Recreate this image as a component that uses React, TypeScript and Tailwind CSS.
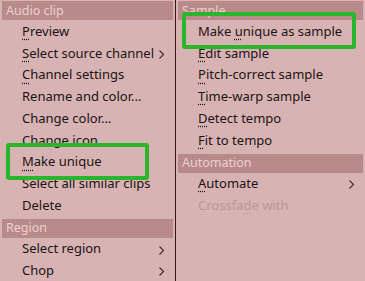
const font = { fontFamily: '"Noto Sans", "Open Sans", sans-serif' };

type Item = { label: string; key?: number; sub?: boolean; disabled?: boolean; header?: boolean };

const left: Item[] = [
  { label: "Audio clip", header: true },
  { label: "Preview", key: 0 },
  { label: "Select source channel", key: 0, sub: true },
  { label: "Channel settings", key: 0 },
  { label: "Rename and color..." },
  { label: "Change color..." },
  { label: "Change icon..." },
  { label: "Make unique", key: 0 },
  { label: "Select all similar clips" },
  { label: "Delete" },
  { label: "Region", header: true },
  { label: "Select region", sub: true },
  { label: "Chop", sub: true },
];

const right: Item[] = [
  { label: "Sample", header: true },
  { label: "Make unique as sample", key: 5 },
  { label: "Edit sample", key: 0 },
  { label: "Pitch-correct sample", key: 0 },
  { label: "Time-warp sample", key: 0 },
  { label: "Detect tempo", key: 0 },
  { label: "Fit to tempo", key: 0 },
  { label: "Automation", header: true },
  { label: "Automate", key: 0, sub: true },
  { label: "Crossfade with", key: 7, disabled: true },
];

const Label = ({ label, k }: { label: string; k?: number }) => {
  if (k === undefined) return <>{label}</>;
  return (
    <>
      {label.slice(0, k)}
      <span className="underline decoration-dotted underline-offset-[3px]">{label[k]}</span>
      {label.slice(k + 1)}
    </>
  );
};

const Row = ({ item }: { item: Item }) => {
  if (item.header) {
    return (
      <div className="h-[21.75px] flex items-center px-[2px]">
        <div className="w-full h-[19px] bg-[#b98a8a] text-[#ecd0d0] text-[12.5px] pl-[4px] flex items-center">
          {item.label}
        </div>
      </div>
    );
  }
  return (
    <div
      className={`h-[21.75px] flex items-center pl-[22px] pr-[10px] text-[13px] whitespace-nowrap ${
        item.disabled ? "text-[#bd9696]" : "text-[#1c1414]"
      }`}
    >
      <span className="flex-1 -mt-[2px]">
        <Label label={item.label} k={item.key} />
      </span>
      {item.sub && (
        <svg width="7" height="11" viewBox="0 0 7 11" className="text-[#3a2a2a]">
          <path d="M1.5 1.5 L5.5 5.5 L1.5 9.5" fill="none" stroke="currentColor" strokeWidth="1.1" />
        </svg>
      )}
    </div>
  );
};

export default function App() {
  return (
    <div className="w-[365px] h-[281px] bg-[#d7b3b3] flex overflow-hidden relative" style={font}>
      <div className="w-[176px] border-r-[1.5px] border-[#3b1414]">
        {left.map((it, i) => (
          <Row key={i} item={it} />
        ))}
      </div>
      <div className="flex-1">
        {right.map((it, i) => (
          <Row key={i} item={it} />
        ))}
      </div>
      <div className="absolute left-[6px] top-[143px] w-[143px] h-[37px] border-[4px] border-[#2bb52b] rounded-[3px]" />
      <div className="absolute left-[182px] top-[12px] w-[174px] h-[37px] border-[4px] border-[#2bb52b] rounded-[3px]" />
    </div>
  );
}
